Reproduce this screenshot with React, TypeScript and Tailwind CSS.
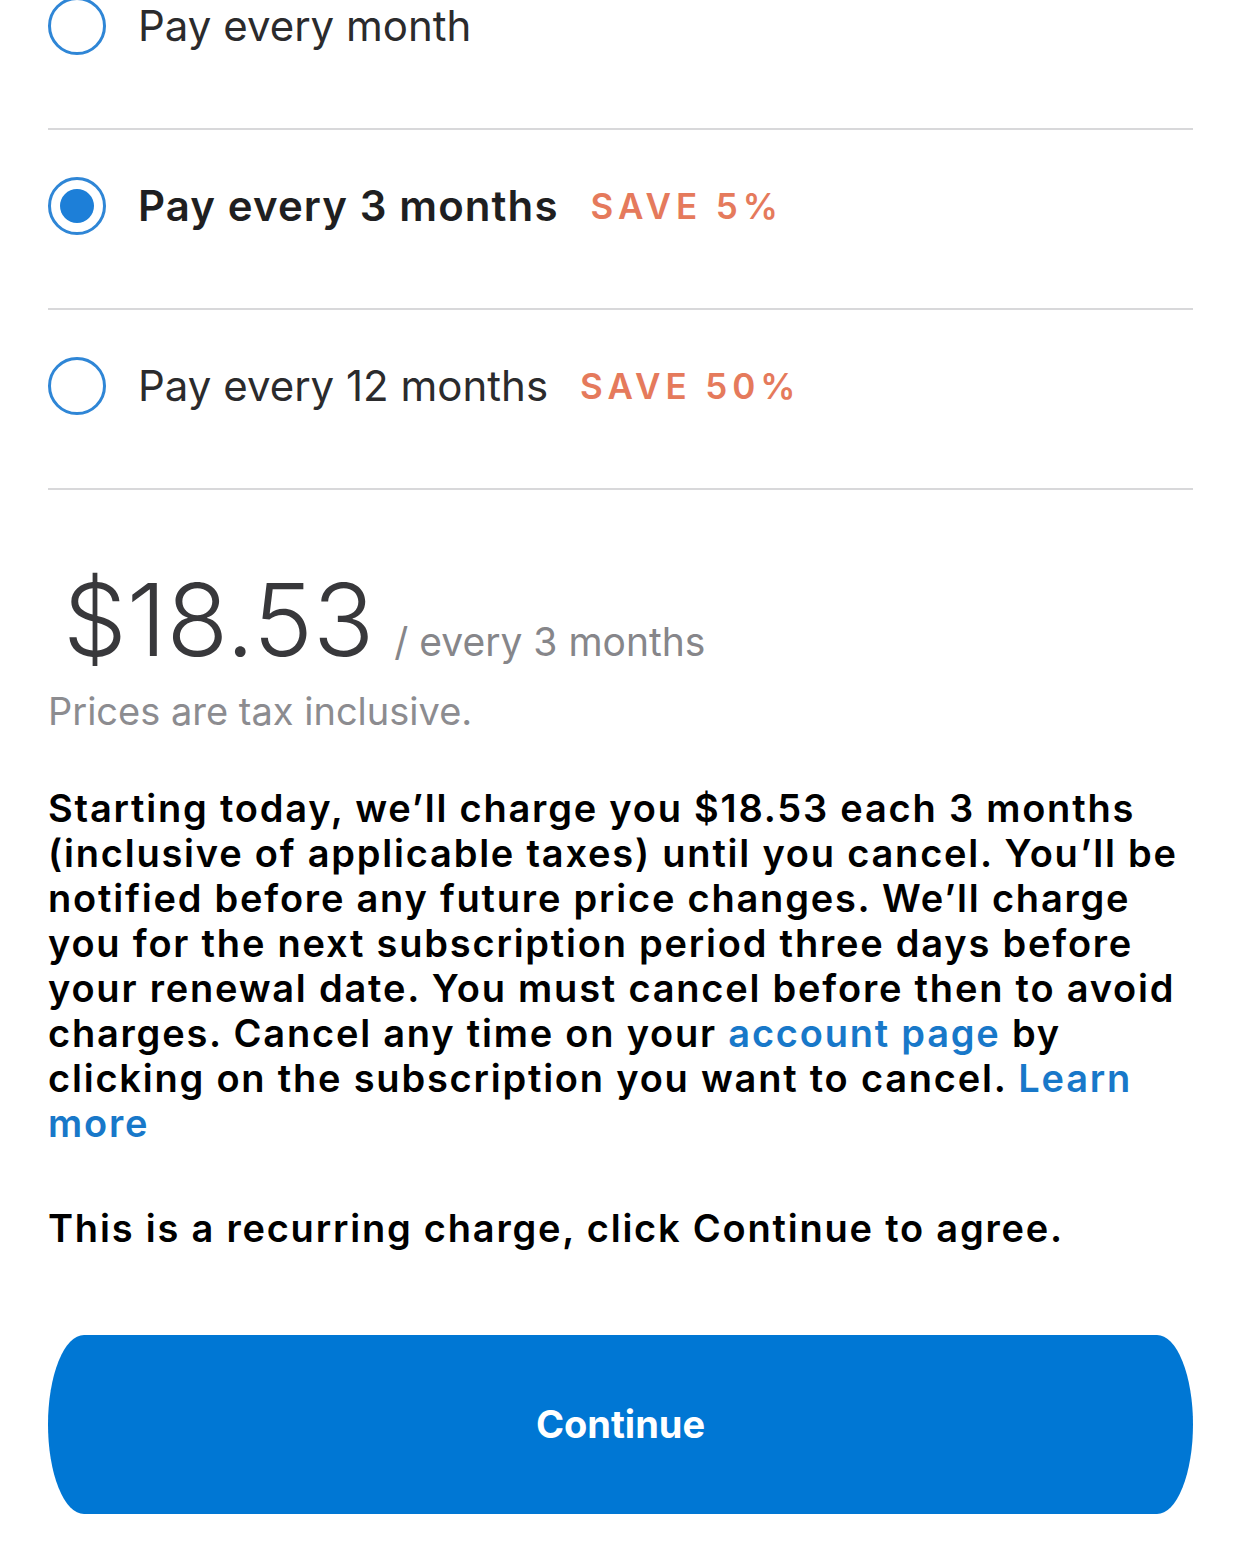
import { useState } from "react"

const plans = [
  { id: "1", label: "Pay every month", save: "" },
  { id: "3", label: "Pay every 3 months", save: "SAVE 5%" },
  { id: "12", label: "Pay every 12 months", save: "SAVE 50%" },
]

function Radio({ checked }: { checked: boolean }) {
  return (
    <span className="flex h-[58px] w-[58px] shrink-0 items-center justify-center rounded-full border-[3px] border-[#2f86d6]">
      {checked && <span className="h-[34px] w-[34px] rounded-full bg-[#1d7fd8]" />}
    </span>
  )
}

export default function App() {
  const [plan, setPlan] = useState("3")

  return (
    <div className="min-h-screen overflow-hidden bg-white font-['Inter',sans-serif] text-black">
      <div className="px-12">
        {/* plan options */}
        <div className="-mt-[50px]">
          {plans.map((p) => {
            const checked = plan === p.id
            return (
              <button
                key={p.id}
                onClick={() => setPlan(p.id)}
                className="flex w-full items-center border-b-2 border-[#d8d8da] pt-[47px] pb-[73px] text-left"
              >
                <Radio checked={checked} />
                <span
                  className={
                    checked
                      ? "ml-8 text-[42px] leading-none font-semibold tracking-[0.026em] text-[#1f1f21]"
                      : "ml-8 text-[42px] leading-none font-normal text-[#2b2b2d]"
                  }
                >
                  {p.label}
                </span>
                {p.save && (
                  <span className="ml-8 text-[35px] leading-none font-semibold tracking-[0.14em] text-[#e57a5c]">
                    {p.save}
                  </span>
                )}
              </button>
            )
          })}
        </div>

        {/* price */}
        <div className="mt-[79px] flex items-baseline pl-[15px]">
          <span className="text-[101px] leading-none font-light text-[#38383b]">$18.53</span>
          <span className="ml-5 text-[39px] leading-none text-[#86868a]">/ every 3 months</span>
        </div>
        <p className="mt-[18px] text-[38px] leading-[46px] text-[#8c8c90]">Prices are tax inclusive.</p>

        {/* terms */}
        <p className="mt-[52px] text-[38px] leading-[45px] font-semibold tracking-[0.047em] text-black">
          <span className="block whitespace-nowrap">Starting today, we’ll charge you $18.53 each 3 months</span>
          <span className="block whitespace-nowrap">(inclusive of applicable taxes) until you cancel. You’ll be</span>
          <span className="block whitespace-nowrap">notified before any future price changes. We’ll charge</span>
          <span className="block whitespace-nowrap">you for the next subscription period three days before</span>
          <span className="block whitespace-nowrap">your renewal date. You must cancel before then to avoid</span>
          <span className="block whitespace-nowrap">
            charges. Cancel any time on your{" "}
            <a href="#" className="text-[#1878c9]">
              account page
            </a>{" "}
            by
          </span>
          <span className="block whitespace-nowrap">
            clicking on the subscription you want to cancel.{" "}
            <a href="#" className="text-[#1878c9]">
              Learn
            </a>
          </span>
          <span className="block">
            <a href="#" className="text-[#1878c9]">
              more
            </a>
          </span>
        </p>

        <p className="mt-[60px] text-[38px] leading-[45px] font-semibold tracking-[0.047em] text-black">
          This is a recurring charge, click Continue to agree.
        </p>

        <button className="mt-[84px] flex h-[179px] w-full items-center justify-center rounded-[36px/50%] bg-[#0077d4] text-[38px] font-bold text-white">
          Continue
        </button>
      </div>
    </div>
  )
}
